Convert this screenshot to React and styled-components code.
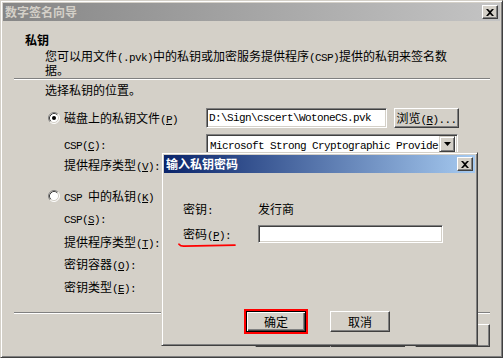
import React from "react";
import styled, { css, createGlobalStyle } from "styled-components";

const GlobalStyle = createGlobalStyle`
  html, body {
    margin: 0;
    padding: 0;
    background: #d4d0c8;
    overflow: hidden;
  }
  body {
    font-family: "Noto Sans CJK SC", "Liberation Sans", sans-serif;
    font-size: 12px;
    line-height: 14px;
    color: #000;
  }
`;

// classic raised window frame (2px bevel + 1px padding)
const Frame = styled.div`
  box-sizing: border-box;
  width: ${(p) => p.$w}px;
  height: ${(p) => p.$h}px;
  padding: 2px;
  background: #d4d0c8;
  border: 1px solid;
  border-color: #d4d0c8 #404040 #404040 #d4d0c8;
  box-shadow: inset 1px 1px #fff, inset -1px -1px #808080;
  display: flex;
  flex-direction: column;
  overflow: hidden;
`;

const Desktop = styled.div`
  position: relative;
`;

// the password prompt sits on top of the wizard window
const Dialog = styled(Frame)`
  position: absolute;
  left: 161px;
  top: 152px;
`;

const TitleBar = styled.div`
  height: 18px;
  flex: none;
  display: flex;
  align-items: center;
  justify-content: space-between;
  padding: 0 2px;
  font-weight: bold;
  line-height: 18px;
  background: ${(p) =>
    p.$active
      ? "linear-gradient(to right, #0a246a, #a6caf0)"
      : "linear-gradient(to right, #868686, #c4c4c4)"};
  color: ${(p) => (p.$active ? "#fff" : "#d4d0c8")};
`;

const CloseBtn = styled.span`
  box-sizing: border-box;
  width: 16px;
  height: 14px;
  background: #d4d0c8;
  border: 1px solid;
  border-color: #fff #404040 #404040 #fff;
  box-shadow: inset -1px -1px #808080;
  display: flex;
  align-items: center;
  justify-content: center;
`;

const Header = styled.div`
  flex: none;
  box-sizing: border-box;
  height: 57px;
  padding: 12px 0 0 22px;
`;

const HeaderTitle = styled.div`
  font-weight: bold;
  height: 14px;
`;

const HeaderDesc = styled.div`
  margin: 2px 0 0 20px;
  line-height: 13px;
`;

const Separator = styled.div`
  flex: none;
  border-top: 1px solid #808080;
  border-bottom: 1px solid #fff;
  margin: ${(p) => p.$mt}px 10px 0 11px;
`;

const Body = styled.div`
  flex: none;
  height: 217px;
  padding-left: 42px;
`;

const Prompt = styled.div`
  padding-top: 3px;
  height: 14px;
`;

const FieldRow = styled.div`
  display: grid;
  grid-template-columns: 161px auto;
  align-items: center;
  height: 20px;
  margin-top: ${(p) => p.$mt}px;
  white-space: nowrap;
`;

const OptionLabel = styled.label`
  display: flex;
  align-items: center;
  gap: 4px;
  padding-left: 3px;
`;

const SubLabel = styled.span`
  padding-left: 19px;
`;

const Controls = styled.div`
  display: flex;
  align-items: center;
  gap: 7px;
`;

// half-width latin runs, SimSun style
const H = styled.span`
  font-family: "Liberation Mono", monospace;
  font-size: 11px;
  line-height: 10px;
  letter-spacing: -0.6px;
`;

const TextBox = styled.div`
  box-sizing: border-box;
  width: ${(p) => p.$w}px;
  height: ${(p) => p.$h}px;
  background: #fff;
  border: 1px solid;
  border-color: #808080 #fff #fff #808080;
  box-shadow: inset 1px 1px #404040, inset -1px -1px #d4d0c8;
  padding: 0 2px 0 2px;
  display: flex;
  align-items: center;
  overflow: hidden;
  white-space: nowrap;
`;

const ComboText = styled.span`
  flex: 1;
  overflow: hidden;
  padding-left: 1px;
`;

const DropBtn = styled.span`
  flex: none;
  box-sizing: border-box;
  width: 16px;
  height: 16px;
  background: #d4d0c8;
  border: 1px solid;
  border-color: #d4d0c8 #404040 #404040 #d4d0c8;
  box-shadow: inset 1px 1px #fff, inset -1px -1px #808080;
  display: flex;
  align-items: center;
  justify-content: center;
`;

const Button = styled.button`
  box-sizing: border-box;
  width: ${(p) => p.$w}px;
  height: ${(p) => p.$h}px;
  padding: 0;
  font: inherit;
  color: #000;
  background: #d4d0c8;
  border: 1px solid;
  border-color: #fff #404040 #404040 #fff;
  box-shadow: inset -1px -1px #808080;
  white-space: nowrap;
  ${(p) =>
    p.$default &&
    css`
      border-color: #000;
      box-shadow: inset 1px 1px #fff, inset -1px -1px #404040,
        inset -2px -2px #808080;
    `}
  ${(p) =>
    p.$marked &&
    css`
      outline: 2px solid #f00;
    `}
`;

const ButtonBar = styled.div`
  flex: none;
  display: flex;
  justify-content: flex-end;
  gap: ${(p) => p.$gap || 0}px;
  margin: 10px 10px 0 0;
`;

const ButtonPair = styled.div`
  display: flex;
`;

const DialogBody = styled.div`
  padding-top: 27px;
  display: flex;
  flex-direction: column;
`;

const DlgRow = styled.div`
  display: grid;
  grid-template-columns: 75px auto;
  align-items: center;
  height: 18px;
  padding-left: 19px;
  margin-top: ${(p) => p.$mt}px;
`;

const DlgLabel = styled.span`
  position: relative;
`;

const Scribble = styled.svg`
  position: absolute;
  left: -5px;
  top: 15px;
`;

const DlgButtons = styled.div`
  display: flex;
  justify-content: center;
  gap: 24px;
  margin-top: 68px;
  padding-right: 3px;
`;

const Mn = ({ k }) => (
  <H>
    (<u>{k}</u>)
  </H>
);

const CloseX = () => (
  <svg width="8" height="7" viewBox="0 0 8 7">
    <path d="M0 0h2l2 2 2-2h2L5 3.5 8 7H6L4 5 2 7H0l3-3.5z" fill="#000" />
  </svg>
);

const Radio = ({ checked }) => (
  <svg width="12" height="12" viewBox="0 0 12 12">
    <circle cx="6" cy="6" r="5" fill="#fff" />
    <path d="M2.11 9.89A5.5 5.5 0 0 1 9.89 2.11" stroke="#808080" fill="none" />
    <path d="M9.89 2.11A5.5 5.5 0 0 1 2.11 9.89" stroke="#fff" fill="none" />
    <path d="M2.82 9.18A4.5 4.5 0 0 1 9.18 2.82" stroke="#404040" fill="none" />
    <path d="M9.18 2.82A4.5 4.5 0 0 1 2.82 9.18" stroke="#d4d0c8" fill="none" />
    {checked && <circle cx="6" cy="6" r="2" fill="#000" />}
  </svg>
);

export default function App() {
  return (
    <>
      <GlobalStyle />
      <Desktop>
        <Frame $w={503} $h={358}>
          <TitleBar>
            <span>数字签名向导</span>
            <CloseBtn>
              <CloseX />
            </CloseBtn>
          </TitleBar>

          <Header>
            <HeaderTitle>私钥</HeaderTitle>
            <HeaderDesc>
              您可以用文件<H>(.pvk)</H>中的私钥或加密服务提供程序<H>(CSP)</H>
              提供的私钥来签名数
              <br />
              据。
            </HeaderDesc>
          </Header>
          <Separator $mt={0} />

          <Body>
            <Prompt>选择私钥的位置。</Prompt>

            <FieldRow $mt={11}>
              <OptionLabel>
                <Radio checked />
                <span>
                  磁盘上的私钥文件<Mn k="P" />
                </span>
              </OptionLabel>
              <Controls>
                <TextBox $w={181} $h={20}>
                  <H>D:\Sign\cscert\WotoneCS.pvk</H>
                </TextBox>
                <Button $w={65} $h={20}>
                  浏览<Mn k="R" />
                  <H>...</H>
                </Button>
              </Controls>
            </FieldRow>

            <FieldRow $mt={6}>
              <SubLabel>
                <H>CSP</H>
                <Mn k="C" />
                <H>:</H>
              </SubLabel>
              <TextBox $w={252} $h={20}>
                <ComboText>
                  <H>Microsoft Strong Cryptographic Provider</H>
                </ComboText>
                <DropBtn>
                  <svg width="7" height="4" viewBox="0 0 7 4">
                    <path d="M0 0h7L3.5 4z" fill="#000" />
                  </svg>
                </DropBtn>
              </TextBox>
            </FieldRow>

            <FieldRow $mt={1}>
              <SubLabel>
                提供程序类型<Mn k="V" />
                <H>:</H>
              </SubLabel>
            </FieldRow>

            <FieldRow $mt={11}>
              <OptionLabel>
                <Radio />
                <span>
                  <H>CSP </H>中的私钥<Mn k="K" />
                </span>
              </OptionLabel>
            </FieldRow>

            <FieldRow $mt={2}>
              <SubLabel>
                <H>CSP</H>
                <Mn k="S" />
                <H>:</H>
              </SubLabel>
            </FieldRow>

            <FieldRow $mt={4}>
              <SubLabel>
                提供程序类型<Mn k="T" />
                <H>:</H>
              </SubLabel>
            </FieldRow>

            <FieldRow $mt={2}>
              <SubLabel>
                密钥容器<Mn k="O" />
                <H>:</H>
              </SubLabel>
            </FieldRow>

            <FieldRow $mt={3}>
              <SubLabel>
                密钥类型<Mn k="E" />
                <H>:</H>
              </SubLabel>
            </FieldRow>
          </Body>

          <Separator $mt={15} />

          <ButtonBar $gap={10}>
            <ButtonPair>
              <Button $w={75} $h={23}>
                <H>&lt; </H>上一步<Mn k="B" />
              </Button>
              <Button $w={75} $h={23}>
                下一步<Mn k="N" />
                <H> &gt;</H>
              </Button>
            </ButtonPair>
            <Button $w={75} $h={23}>
              取消
            </Button>
          </ButtonBar>
        </Frame>

        <Dialog $w={317} $h={194}>
          <TitleBar $active>
            <span>输入私钥密码</span>
            <CloseBtn>
              <CloseX />
            </CloseBtn>
          </TitleBar>
          <DialogBody>
            <DlgRow $mt={0}>
              <span>
                密钥<H>:</H>
              </span>
              <span>发行商</span>
            </DlgRow>
            <DlgRow $mt={7}>
              <DlgLabel>
                密码<Mn k="P" />
                <H>:</H>
                <Scribble width="58" height="6" viewBox="0 0 58 6">
                  <path
                    d="M1 2.2Q2.5 4.2 6 4.1L57 3.2"
                    stroke="#f00"
                    strokeWidth="1.7"
                    fill="none"
                    strokeLinecap="round"
                  />
                </Scribble>
              </DlgLabel>
              <TextBox $w={185} $h={18} />
            </DlgRow>
            <DlgButtons>
              <Button $w={60} $h={21} $default $marked>
                确定
              </Button>
              <Button $w={60} $h={21}>
                取消
              </Button>
            </DlgButtons>
          </DialogBody>
        </Dialog>
      </Desktop>
    </>
  );
}
